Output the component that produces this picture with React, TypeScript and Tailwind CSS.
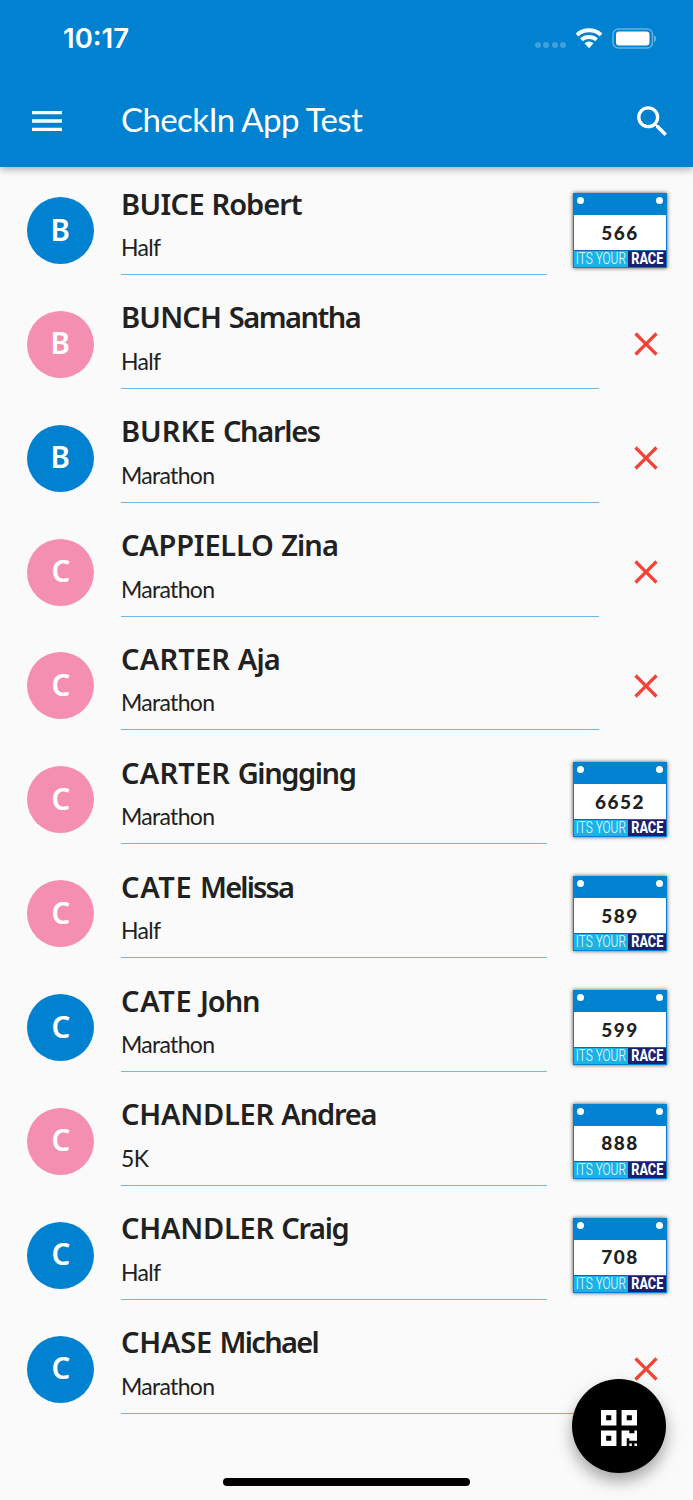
import React from 'react';
import { MdClose, MdMenu, MdSearch } from 'react-icons/md';

interface Entrant {
  surname: string;
  given: string;
  race: string;
  color: 'blue' | 'pink';
  bib?: number;
  // letter spacing for surname and given name
  tracking: [string, string];
}

const entrants: Entrant[] = [
  { surname: 'BUICE', given: 'Robert', race: 'Half', color: 'blue', bib: 566, tracking: ['tracking-[-0.65px]', 'tracking-[-1px]'] },
  { surname: 'BUNCH', given: 'Samantha', race: 'Half', color: 'pink', tracking: ['tracking-[-0.8px]', 'tracking-[-1.5px]'] },
  { surname: 'BURKE', given: 'Charles', race: 'Marathon', color: 'blue', tracking: ['tracking-[0px]', 'tracking-[-1.3px]'] },
  { surname: 'CAPPIELLO', given: 'Zina', race: 'Marathon', color: 'pink', tracking: ['tracking-[-0.2px]', 'tracking-[-0.9px]'] },
  { surname: 'CARTER', given: 'Aja', race: 'Marathon', color: 'pink', tracking: ['tracking-[0.2px]', 'tracking-[-0.8px]'] },
  { surname: 'CARTER', given: 'Gingging', race: 'Marathon', color: 'pink', bib: 6652, tracking: ['tracking-[0.2px]', 'tracking-[-1.4px]'] },
  { surname: 'CATE', given: 'Melissa', race: 'Half', color: 'pink', bib: 589, tracking: ['tracking-[0.7px]', 'tracking-[-1.8px]'] },
  { surname: 'CATE', given: 'John', race: 'Marathon', color: 'blue', bib: 599, tracking: ['tracking-[0.7px]', 'tracking-[-1.1px]'] },
  { surname: 'CHANDLER', given: 'Andrea', race: '5K', color: 'pink', bib: 888, tracking: ['tracking-[-0.25px]', 'tracking-[-1.2px]'] },
  { surname: 'CHANDLER', given: 'Craig', race: 'Half', color: 'blue', bib: 708, tracking: ['tracking-[-0.25px]', 'tracking-[-1.4px]'] },
  { surname: 'CHASE', given: 'Michael', race: 'Marathon', color: 'blue', tracking: ['tracking-[-0.2px]', 'tracking-[-1.7px]'] },
];

const avatarColors = {
  blue: 'bg-[#0082d0]',
  pink: 'bg-[#f48fb1]',
};

const StatusBar: React.FC = () => (
  <div className="flex h-[76px] items-center justify-between pl-[63px] pr-9">
    <span className="mt-[2px] font-['Inter'] text-[27.5px] font-semibold leading-none">10:17</span>
    <div className="flex items-center">
      <div className="mt-[13px] flex gap-[2.5px]">
        {[0, 1, 2, 3].map((dot) => (
          <span key={dot} className="h-1.5 w-1.5 rounded-full bg-white/25" />
        ))}
      </div>
      <svg className="ml-[9px] mr-px h-[21px] w-[28px]" viewBox="0 0 28 21" fill="none" stroke="#fff">
        <path d="M2 6.900a18 18 0 0 1 24 0" strokeWidth="4" />
        <path d="M6.4 11.800a11.400 11.400 0 0 1 15.200 0" strokeWidth="4" />
        <path d="M14 20.300l-4.500-5a6.700 6.700 0 0 1 9 0z" fill="#fff" stroke="none" />
      </svg>
      <svg className="ml-2 h-[21px] w-[45px]" viewBox="0 0 45 21">
        <rect x="1" y="1" width="39.5" height="19" rx="5.5" fill="none" stroke="#fff" strokeOpacity=".4" strokeWidth="1.4" />
        <rect x="4" y="3.6" width="33.5" height="14" rx="3" fill="#fff" />
        <path d="M42.2 7.2c2.3.8 2.3 6 0 6.800z" fill="#fff" fillOpacity=".45" />
      </svg>
    </div>
  </div>
);

const Header: React.FC = () => (
  <header className="relative h-[167px] bg-[#0082d0] text-white shadow-[0_2px_8px_rgba(0,0,0,0.35)]">
    <StatusBar />
    <div className="flex h-[90px] items-center px-[27px]">
      <MdMenu className="h-10 w-10" />
      <h1 className="-mt-[4px] ml-[54px] flex-1 font-['Lato'] text-[33px] leading-none tracking-[-0.6px]">CheckIn App Test</h1>
      <MdSearch className="-mr-[7px] h-[41px] w-[41px]" />
    </div>
  </header>
);

const Bib: React.FC<{ value: number }> = ({ value }) => (
  <div className="flex h-[75px] w-[94px] flex-col border border-[#0082d0] bg-white shadow-[0_0_4px_rgba(0,0,0,0.7)]">
    <div className="flex h-[21px] justify-between bg-[#0082d0] px-[3px] pt-[3px]">
      <span className="h-[7px] w-[7px] rounded-full bg-white" />
      <span className="h-[7px] w-[7px] rounded-full bg-white" />
    </div>
    <div className="flex flex-1 items-center justify-center pb-px font-['Lato'] text-[19px] font-black leading-none tracking-[1.5px] text-[#212121]">
      {value}
    </div>
    <div className="flex h-[17px] shrink-0 border-t border-[#1565b0] font-['Roboto'] text-[16px] leading-4 text-white">
      <span className="flex w-[54px] shrink-0 justify-center bg-[#1ab3e8]">
        <span className="scale-x-[0.74] whitespace-nowrap font-light">ITS YOUR</span>
      </span>
      <span className="flex w-[38px] shrink-0 justify-center bg-[#1b1f70]">
        <span className="scale-x-[0.79] font-extrabold">RACE</span>
      </span>
    </div>
  </div>
);

const EntrantRow: React.FC<{ entrant: Entrant }> = ({ entrant }) => {
  const { surname, given, race, color, bib, tracking } = entrant;

  return (
    <li className="flex h-[113.85px] items-center pl-[27px]">
      <div className={`flex h-[67px] w-[67px] items-center justify-center rounded-full text-[31px] font-semibold text-white ${avatarColors[color]}`}>
        <span className="-mt-[3px] scale-x-95 leading-none">{surname[0]}</span>
      </div>
      <div className="ml-[27px] flex h-[89px] flex-1 flex-col border-b border-[#6cb9e8] text-[#212121]">
        <h2 className="-mt-[0.5px] whitespace-nowrap text-[29px] font-semibold leading-[36px]">
          <span className={tracking[0]}>{surname}</span> <span className={tracking[1]}>{given}</span>
        </h2>
        <p className="mt-[10.5px] font-['Lato'] text-[23px] leading-[30px] tracking-[-0.7px]">{race}</p>
      </div>
      {bib ? (
        <div className="ml-[26px] mr-[26px]">
          <Bib value={bib} />
        </div>
      ) : (
        <MdClose className="ml-[27px] mr-[27px] h-10 w-10 text-[#f44336]" />
      )}
    </li>
  );
};

const App: React.FC = () => (
  <div className="relative h-[1500px] w-[693px] overflow-hidden bg-[#fafafa] font-['Noto_Sans',sans-serif]">
    <Header />
    <ul className="pt-[6.7px]">
      {entrants.map((entrant) => (
        <EntrantRow key={`${entrant.surname} ${entrant.given}`} entrant={entrant} />
      ))}
    </ul>
    <button className="absolute bottom-[27px] right-[27px] flex h-[94px] w-[94px] items-center justify-center rounded-full bg-black shadow-[0_8px_16px_rgba(0,0,0,0.35)]">
      <svg className="mt-[3px] h-9 w-9" viewBox="0 0 14 14" fill="#fff">
        <path fillRule="evenodd" d="M0 0h6v6H0zM2 2v2h2V2zM8 0h6v6H8zM10 2v2h2V2zM0 8h6v6H0zM2 10v2h2v-2z" />
        <path d="M8 8h3v1h2V8h1v4h-3v-1h-1v3H8zM11 13h1v1h-1zM13 13h1v1h-1z" />
      </svg>
    </button>
    <div className="absolute bottom-[14px] left-[223px] h-2 w-[247px] rounded-full bg-black" />
  </div>
);

export default App;
